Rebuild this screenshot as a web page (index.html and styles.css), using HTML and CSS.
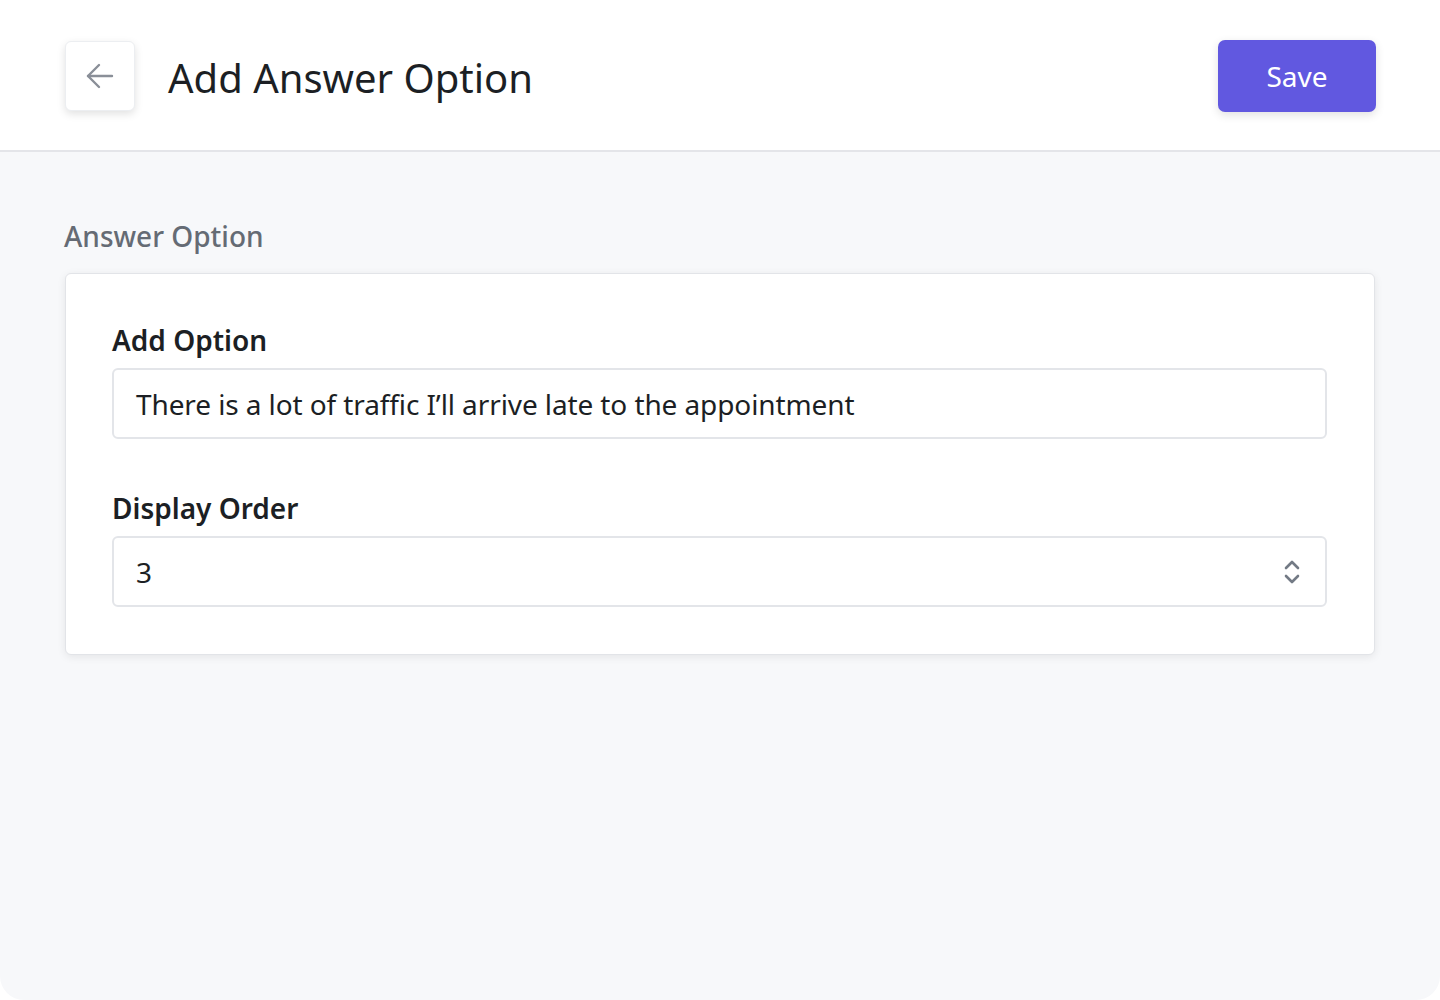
FILE: index.html
```html
<!DOCTYPE html>
<html lang="en">
<head>
<meta charset="utf-8">
<title>Add Answer Option</title>
<link rel="stylesheet" href="styles.css">
</head>
<body>
<div class="page">
  <header class="topbar">
    <div class="topbar-left">
      <button class="back-btn" aria-label="Back">
        <svg width="30" height="30" viewBox="0 0 30 30" fill="none" stroke="#8a8f98" stroke-width="2.4" stroke-linecap="round" stroke-linejoin="round">
          <path d="M27 15H3"/>
          <path d="M14 4L3 15l11 11"/>
        </svg>
      </button>
      <h1 class="title">Add Answer Option</h1>
    </div>
    <button class="save-btn">Save</button>
  </header>
  <main class="content">
    <h2 class="section-label">Answer Option</h2>
    <section class="card">
      <div class="field">
        <label class="field-label">Add Option</label>
        <div class="input">There is a lot of traffic I’ll arrive late to the appointment</div>
      </div>
      <div class="field">
        <label class="field-label">Display Order</label>
        <div class="input input-number">
          <span>3</span>
          <svg class="spinner" width="18" height="26" viewBox="0 0 18 26" fill="none" stroke="#737a85" stroke-width="2.6" stroke-linecap="round" stroke-linejoin="round">
            <path d="M3 9l6-6 6 6"/>
            <path d="M3 17l6 6 6-6"/>
          </svg>
        </div>
      </div>
    </section>
  </main>
</div>
</body>
</html>
```

FILE: styles.css
```css
* { box-sizing: border-box; }
html, body { margin: 0; padding: 0; background: #ffffff; }
body {
  font-family: "Noto Sans", "Open Sans", sans-serif;
  color: #1c1f24;
}
.page {
  width: 1440px;
  height: 1000px;
  background: #f7f8fa;
  border-radius: 0 0 24px 24px;
  overflow: hidden;
  display: flex;
  flex-direction: column;
}
.topbar {
  height: 152px;
  flex: none;
  background: #ffffff;
  border-bottom: 2px solid #e4e5e9;
  display: flex;
  align-items: center;
  justify-content: space-between;
  padding: 0 64px 0 65px;
}
.topbar-left {
  display: flex;
  align-items: center;
  gap: 33px;
}
.back-btn {
  width: 70px;
  height: 70px;
  margin-top: 2px;
  background: #ffffff;
  border: 1px solid #eceef1;
  border-radius: 6px;
  box-shadow: 0 3px 8px rgba(0, 0, 0, 0.12);
  display: flex;
  align-items: center;
  justify-content: center;
  padding: 0;
}
.title {
  margin: 5px 0 0 0;
  font-size: 40px;
  font-weight: 400;
  color: #1c1f24;
  line-height: 1;
}
.save-btn {
  width: 158px;
  height: 72px;
  margin-top: 2px;
  background: #6158e0;
  color: #ffffff;
  border: none;
  border-radius: 7px;
  box-shadow: 0 3px 10px rgba(0, 0, 0, 0.12);
  font-family: inherit;
  font-size: 28px;
  font-weight: 400;
}
.content {
  padding: 66px 64px 0 64px;
}
.section-label {
  margin: 0 0 19px 0;
  font-size: 28px;
  font-weight: 500;
  color: #656b74;
  line-height: 36px;
}
.card {
  margin-left: 1px;
  width: 1310px;
  background: #ffffff;
  border: 1px solid #e2e4e8;
  border-radius: 6px;
  box-shadow: 0 2px 8px rgba(0, 0, 0, 0.08);
  padding: 48px 47px 47px 46px;
  display: flex;
  flex-direction: column;
  gap: 51px;
}
.field {
  display: flex;
  flex-direction: column;
  gap: 10px;
}
.field-label {
  font-size: 28px;
  font-weight: 600;
  color: #1c1f24;
  line-height: 36px;
}
.input {
  height: 71px;
  border: 2px solid #e3e5e9;
  border-radius: 6px;
  padding: 0 22px;
  display: flex;
  align-items: center;
  font-size: 28px;
  color: #1c1f24;
  letter-spacing: -0.1px;
}
.input-number {
  justify-content: space-between;
  padding-right: 24px;
}
.spinner { display: block; }
```
